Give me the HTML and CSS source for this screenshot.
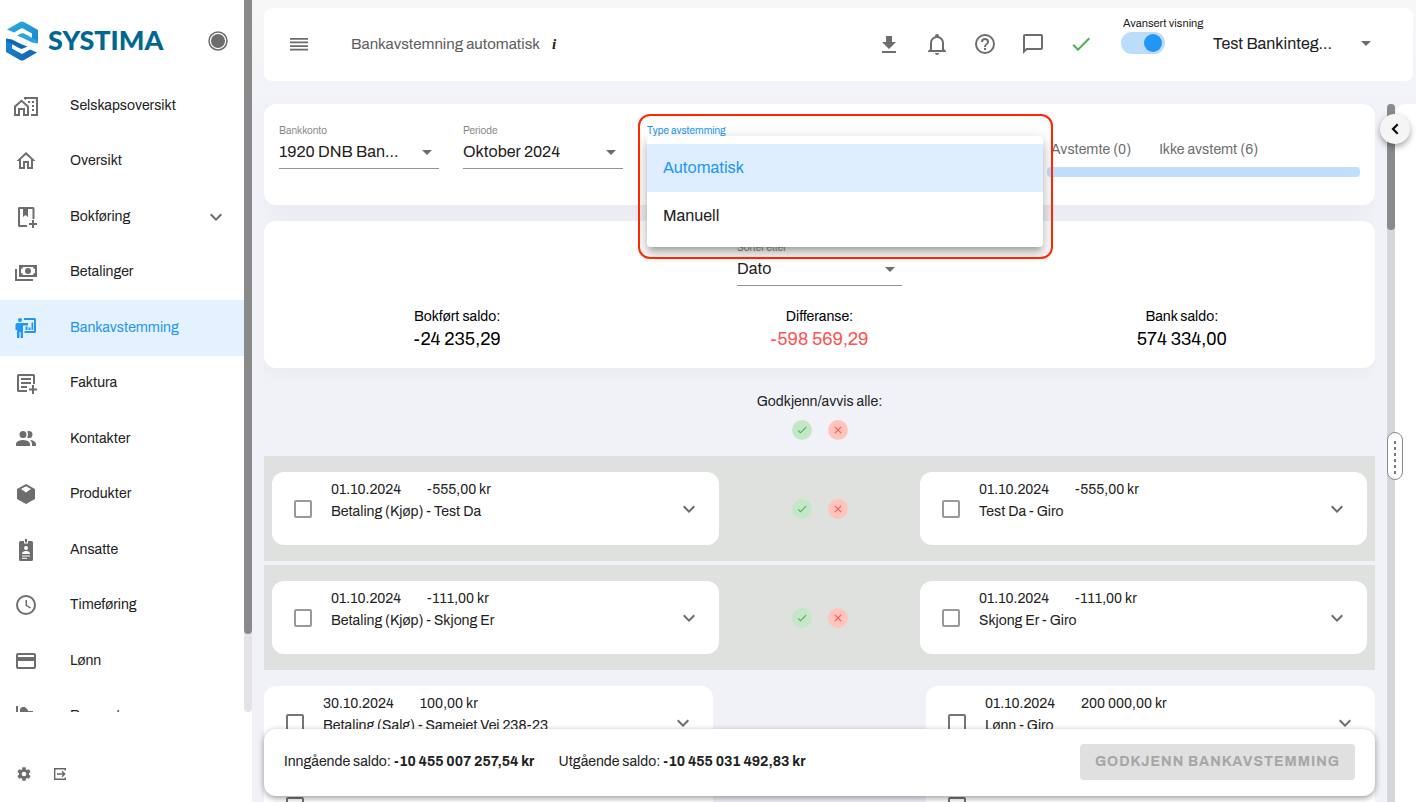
FILE: index.html
```html
<!DOCTYPE html>
<html lang="no">
<head>
    <meta charset="UTF-8">
    <meta name="viewport" content="width=device-width, initial-scale=1.0">
    <title>Bankavstemning automatisk</title>
    <link rel="stylesheet" href="styles.css">
</head>
<body>
<svg class="sprite" aria-hidden="true">
    <symbol id="chevron" viewBox="0 0 24 24"><path d="M7.41 8.58L12 13.17l4.59-4.59L18 10l-6 6-6-6z"/></symbol>
    <symbol id="check" viewBox="0 0 24 24"><path d="M21 7L9 19l-5.500-5.500 1.410-1.410L9 16.170 19.590 5.590z"/></symbol>
    <symbol id="cross" viewBox="0 0 24 24"><path d="M19 6.410L17.590 5 12 10.590 6.410 5 5 6.410 10.590 12 5 17.590 6.410 19 12 13.410 17.590 19 19 17.590 13.410 12z"/></symbol>
</svg>

<aside class="sidebar">
    <div class="side-main">
        <div class="brand">
            <a href="#" class="logo">
                <svg width="32" height="40" viewBox="0 0 32 40">
                    <defs>
                        <linearGradient id="g1" x1="0" y1="0" x2="1" y2="1"><stop offset="0" stop-color="#2bade2"/><stop offset="1" stop-color="#1a86cc"/></linearGradient>
                        <linearGradient id="g2" x1="0" y1="0" x2="1" y2="1"><stop offset="0" stop-color="#1b8ad4"/><stop offset="1" stop-color="#1062b3"/></linearGradient>
                    </defs>
                    <path fill="url(#g1)" d="M1 8.500L14 1q2-1 4 0l14 8v13L26 19v-6.500L17 7.500q-1-.5-2 0L8 11.500z"/>
                    <path fill="#2ba3df" d="M11 14.500l4-2q1.500-.7 3 0L32 20v2.500l-6-1-9-4.500z"/>
                    <path fill="url(#g2)" d="M31 31.500L18 39q-2 1-4 0L0 31V18l6 3v6.500l9 5q1 .5 2 0l7-4z"/>
                    <path fill="#0f68b8" d="M0 17.500l6 1 9 4.500 6.500 2.500-4.500 2q-1.500.7-3 0L0 20z"/>
                </svg>
                <span>SYSTIMA</span>
            </a>
            <button class="icon-btn" aria-label="Fest meny">
                <svg width="20" height="20" viewBox="0 0 20 20"><circle cx="10" cy="10" r="9" fill="none" stroke="#6d6d6d" stroke-width="1.500"/><circle cx="10" cy="10" r="7"/></svg>
            </button>
        </div>
        <nav class="menu">
            <div class="items">
                <a href="#">
                    <svg viewBox="0 0 24 24"><path fill-rule="evenodd" d="M0 12l7.500-6.500L15 12v10H9v-6H6v6H0zm2 1v7h2v-6h7v6h2v-7L7.500 8zM10 3h14v19h-7v-2h5V5H12v1l-2-1zM14 7h2v2h-2zm4 0h2v2h-2zm0 4h2v2h-2zm0 4h2v2h-2z"/></svg>
                    <span>Selskapsoversikt</span>
                </a>
                <a href="#">
                    <svg viewBox="0 0 24 24"><path d="M12 5.690l5 4.500V18h-2v-6H9v6H7v-7.810l5-4.500M12 3L2.500 12H5v8h6v-6h2v6h6v-8h2.500"/></svg>
                    <span>Oversikt</span>
                </a>
                <a href="#">
                    <svg viewBox="0 0 24 24"><path fill-rule="evenodd" d="M5 2h14a1.500 1.500 0 0 1 1.500 1.500V14h-2V4H14v8l-2.500-2L9 12V4H6v16h7v2H5.500A1.500 1.500 0 0 1 4 20.500v-17A1.500 1.500 0 0 1 5 2zM18 15h2v3h3v2h-3v3h-2v-3h-3v-2h3z"/></svg>
                    <span>Bokføring</span>
                    <svg class="arrow"><use href="#chevron"/></svg>
                </a>
                <a href="#">
                    <svg viewBox="0 0 24 24"><path fill-rule="evenodd" d="M5 5h18v12H5zm2 4v4a2 2 0 0 1 2 2h10a2 2 0 0 1 2-2V9a2 2 0 0 1-2-2H9a2 2 0 0 1-2 2zM14 8a3 3 0 1 1 0 6 3 3 0 0 1 0-6zM1 9h2v10h16v2H1z"/></svg>
                    <span>Betalinger</span>
                </a>
                <a href="#" class="active">
                    <svg viewBox="0 0 24 24"><path d="M6 2a2 2 0 1 1 0 4 2 2 0 0 1 0-4zM3 7h11v2.500H9V22H6.700v-6H5.500v6H3v-8H1.500V9A2 2 0 0 1 3 7zM10 2h10.500A1.500 1.500 0 0 1 22 3.500v12a1.500 1.500 0 0 1-1.500 1.500H10.500v-2H20V4H10zM11.500 10.500h2V14h-2zm3 1h2V14h-2zm3-5h1.700V14h-1.700z"/></svg>
                    <span>Bankavstemming</span>
                </a>
                <a href="#">
                    <svg viewBox="0 0 24 24"><path d="M4.500 3h15A1.500 1.500 0 0 1 21 4.500V13h-2V5H5v14h8v2H4.500A1.500 1.500 0 0 1 3 19.500v-15A1.500 1.500 0 0 1 4.500 3zM7 7h10v2H7zm0 4h10v2H7zm0 4h6v2H7zm11-1h2v3.500h3v2h-3V23h-2v-3.500h-3v-2h3z"/></svg>
                    <span>Faktura</span>
                </a>
                <a href="#">
                    <svg viewBox="0 0 24 24"><path d="M16 17v2H2v-2s0-4 7-4 7 4 7 4M12.500 7.500A3.500 3.500 0 1 0 9 11a3.500 3.500 0 0 0 3.500-3.500M15.940 13A5.320 5.320 0 0 1 18 17v2h4v-2s0-3.630-6.060-4M15 4a3.390 3.390 0 0 0-1.930.590 5 5 0 0 1 0 5.820A3.390 3.390 0 0 0 15 11a3.500 3.500 0 0 0 0-7z"/></svg>
                    <span>Kontakter</span>
                </a>
                <a href="#">
                    <svg viewBox="0 0 24 24"><path fill-rule="evenodd" d="M12 2l9 5v10l-9 5-9-5V7zM7 7l5 3.500L17 7l-5-2.800z"/></svg>
                    <span>Produkter</span>
                </a>
                <a href="#">
                    <svg viewBox="0 0 24 24"><path fill-rule="evenodd" d="M6.500 3H10v2.500h4V3h3.500A1.500 1.500 0 0 1 19 4.500v17a1.500 1.500 0 0 1-1.500 1.500h-11A1.500 1.500 0 0 1 5 21.500v-17A1.500 1.500 0 0 1 6.500 3zM11 1h2v3.500h-2zm1 7a2 2 0 1 0 0 4 2 2 0 0 0 0-4zm-4 8h8c0-2-1.500-3-4-3s-4 1-4 3zm0 1.500v1h8v-1zm0 2.200v1h5v-1z"/></svg>
                    <span>Ansatte</span>
                </a>
                <a href="#">
                    <svg viewBox="0 0 24 24"><path d="M12 20a8 8 0 1 0 0-16 8 8 0 0 0 0 16m0-18a10 10 0 1 1 0 20 10 10 0 0 1 0-20m-.5 5H13v5l4 2.400-.8 1.200-4.700-2.800z"/></svg>
                    <span>Timeføring</span>
                </a>
                <a href="#">
                    <svg viewBox="0 0 24 24"><path d="M20 8H4V6h16m0 12H4v-6h16m0-8H4a2 2 0 0 0-2 2v12a2 2 0 0 0 2 2h16a2 2 0 0 0 2-2V6a2 2 0 0 0-2-2z"/></svg>
                    <span>Lønn</span>
                </a>
                <a href="#">
                    <svg viewBox="0 0 24 24"><path d="M2 2h2v16h18v2H2zM8 3h3l3 3v9H6V5zM14 7h5v8h-5z"/></svg>
                    <span>Rapporter</span>
                </a>
            </div>
        </nav>
        <div class="side-foot">
            <button class="icon-btn" aria-label="Innstillinger">
                <svg width="16" height="16" viewBox="0 0 24 24"><path d="M12,15.500A3.500,3.500 0 0,1 8.500,12A3.500,3.500 0 0,1 12,8.500A3.500,3.500 0 0,1 15.500,12A3.500,3.500 0 0,1 12,15.500M19.430,12.970C19.470,12.650 19.500,12.330 19.500,12C19.500,11.670 19.470,11.340 19.430,11L21.540,9.370C21.730,9.220 21.780,8.950 21.660,8.730L19.660,5.270C19.540,5.050 19.270,4.960 19.050,5.050L16.560,6.050C16.040,5.660 15.500,5.320 14.870,5.070L14.500,2.420C14.460,2.180 14.250,2 14,2H10C9.750,2 9.540,2.180 9.500,2.420L9.130,5.070C8.500,5.320 7.960,5.660 7.440,6.050L4.950,5.050C4.730,4.960 4.460,5.050 4.340,5.270L2.340,8.730C2.210,8.950 2.270,9.220 2.460,9.370L4.570,11C4.530,11.340 4.500,11.670 4.500,12C4.500,12.330 4.530,12.650 4.570,12.970L2.460,14.630C2.270,14.780 2.210,15.050 2.340,15.270L4.340,18.730C4.460,18.950 4.730,19.030 4.950,18.950L7.440,17.940C7.960,18.340 8.500,18.680 9.130,18.930L9.500,21.580C9.540,21.820 9.750,22 10,22H14C14.250,22 14.460,21.820 14.500,21.580L14.870,18.930C15.500,18.670 16.040,18.340 16.560,17.940L19.050,18.950C19.270,19.030 19.540,18.950 19.660,18.730L21.660,15.270C21.780,15.050 21.730,14.780 21.540,14.630L19.430,12.970Z"/></svg>
            </button>
            <button class="icon-btn" aria-label="Logg ut">
                <svg width="16" height="16" viewBox="0 0 16 16"><path fill="none" stroke="#666" stroke-width="1.400" d="M13.300 4.500V2.700H2.700v10.600h10.600v-1.800M5 8h7.500M10 5.300L12.700 8 10 10.700"/></svg>
            </button>
        </div>
    </div>
    <div class="scrollbar side-bar"><div class="thumb"></div></div>
</aside>

<main>
    <header class="topbar">
        <button class="icon-btn" aria-label="Meny">
            <svg width="20" height="20" viewBox="0 0 20 20"><path d="M1 4h18v1.700H1zm0 3.600h18v1.700H1zm0 3.600h18v1.700H1zm0 3.600h18v1.700H1z"/></svg>
        </button>
        <h1>Bankavstemning automatisk</h1>
        <i class="info">i</i>
        <div class="tools">
            <button class="icon-btn" aria-label="Last ned"><svg viewBox="0 0 24 24"><path d="M5 21h14v-2H5m14-9h-4V4H9v6H5l7 7z"/></svg></button>
            <button class="icon-btn" aria-label="Varsler"><svg viewBox="0 0 24 24"><path d="M10 21h4c0 1.100-.9 2-2 2s-2-.9-2-2m11-2v1H3v-1l2-2v-6c0-3.100 2.030-5.830 5-6.710V4a2 2 0 0 1 4 0v.290c2.970.880 5 3.610 5 6.710v6zm-4-8c0-2.760-2.240-5-5-5s-5 2.240-5 5v7h10z"/></svg></button>
            <button class="icon-btn" aria-label="Hjelp"><svg viewBox="0 0 24 24"><path d="M11 18h2v-2h-2zm1-16a10 10 0 1 0 0 20 10 10 0 0 0 0-20m0 18a8 8 0 1 1 0-16 8 8 0 0 1 0 16m0-14a4 4 0 0 0-4 4h2a2 2 0 1 1 4 0c0 2-3 1.750-3 5h2c0-2.250 3-2.500 3-5a4 4 0 0 0-4-4z"/></svg></button>
            <button class="icon-btn" aria-label="Meldinger"><svg viewBox="0 0 24 24"><path d="M20 2H4a2 2 0 0 0-2 2v18l4-4h14a2 2 0 0 0 2-2V4a2 2 0 0 0-2-2m0 14H5.200L4 17.200V4h16z"/></svg></button>
            <button class="icon-btn ok" aria-label="Status"><svg><use href="#check"/></svg></button>
        </div>
        <div class="switch">
            <label for="adv">Avansert visning</label>
            <input type="checkbox" id="adv" checked>
        </div>
        <div class="select company">
            <select aria-label="Selskap"><option>Test Bankinteg...</option></select>
        </div>
    </header>

    <div class="body">
        <div class="content">
            <section class="card filters">
                <div class="field">
                    <label for="konto">Bankkonto</label>
                    <div class="select"><select id="konto"><option>1920 DNB Ban...</option></select></div>
                </div>
                <div class="field">
                    <label for="periode">Periode</label>
                    <div class="select"><select id="periode"><option>Oktober 2024</option></select></div>
                </div>
                <div class="field open">
                    <span class="label" id="type">Type avstemming</span>
                    <div class="marker"></div>
                    <ul class="dropdown" role="listbox" aria-labelledby="type">
                        <li role="option" aria-selected="true" class="active">Automatisk</li>
                        <li role="option">Manuell</li>
                    </ul>
                </div>
                <div class="progress">
                    <div class="legend"><span>Avstemte (0)</span><span>Ikke avstemt (6)</span></div>
                    <div class="bar"></div>
                </div>
            </section>

            <section class="card summary">
                <div class="field sort">
                    <label for="sort">Sorter etter</label>
                    <div class="select"><select id="sort"><option>Dato</option></select></div>
                </div>
                <div class="balances">
                    <div><p>Bokført saldo:</p><strong>-24 235,29</strong></div>
                    <div><p>Differanse:</p><strong class="diff">-598 569,29</strong></div>
                    <div><p>Bank saldo:</p><strong>574 334,00</strong></div>
                </div>
            </section>

            <div class="approve-all">
                <p>Godkjenn/avvis alle:</p>
                <div class="actions">
                    <button class="yes" aria-label="Godkjenn alle"><svg><use href="#check"/></svg></button>
                    <button class="no" aria-label="Avvis alle"><svg><use href="#cross"/></svg></button>
                </div>
            </div>

            <div class="row match">
                <div class="post">
                    <input type="checkbox" aria-label="Velg">
                    <div class="text"><div><span>01.10.2024</span><span>-555,00 kr</span></div><p>Betaling (Kjøp) - Test Da</p></div>
                    <button class="icon-btn" aria-label="Vis mer"><svg><use href="#chevron"/></svg></button>
                </div>
                <div class="actions">
                    <button class="yes" aria-label="Godkjenn"><svg><use href="#check"/></svg></button>
                    <button class="no" aria-label="Avvis"><svg><use href="#cross"/></svg></button>
                </div>
                <div class="post">
                    <input type="checkbox" aria-label="Velg">
                    <div class="text"><div><span>01.10.2024</span><span>-555,00 kr</span></div><p>Test Da - Giro</p></div>
                    <button class="icon-btn" aria-label="Vis mer"><svg><use href="#chevron"/></svg></button>
                </div>
            </div>
            <div class="row match">
                <div class="post">
                    <input type="checkbox" aria-label="Velg">
                    <div class="text"><div><span>01.10.2024</span><span>-111,00 kr</span></div><p>Betaling (Kjøp) - Skjong Er</p></div>
                    <button class="icon-btn" aria-label="Vis mer"><svg><use href="#chevron"/></svg></button>
                </div>
                <div class="actions">
                    <button class="yes" aria-label="Godkjenn"><svg><use href="#check"/></svg></button>
                    <button class="no" aria-label="Avvis"><svg><use href="#cross"/></svg></button>
                </div>
                <div class="post">
                    <input type="checkbox" aria-label="Velg">
                    <div class="text"><div><span>01.10.2024</span><span>-111,00 kr</span></div><p>Skjong Er - Giro</p></div>
                    <button class="icon-btn" aria-label="Vis mer"><svg><use href="#chevron"/></svg></button>
                </div>
            </div>
            <div class="rest">
                <div class="row">
                    <div class="post">
                        <input type="checkbox" aria-label="Velg">
                        <div class="text"><div><span>30.10.2024</span><span>100,00 kr</span></div><p>Betaling (Salg) - Sameiet Vei 238-23</p></div>
                        <button class="icon-btn" aria-label="Vis mer"><svg><use href="#chevron"/></svg></button>
                    </div>
                    <div class="post">
                        <input type="checkbox" aria-label="Velg">
                        <div class="text"><div><span>01.10.2024</span><span>200 000,00 kr</span></div><p>Lønn - Giro</p></div>
                        <button class="icon-btn" aria-label="Vis mer"><svg><use href="#chevron"/></svg></button>
                    </div>
                </div>
                <div class="row">
                    <div class="post">
                        <input type="checkbox" aria-label="Velg">
                        <div class="text"><div><span>30.10.2024</span><span>100,00 kr</span></div><p>Betaling (Salg) - Sameiet Vei 238-23</p></div>
                        <button class="icon-btn" aria-label="Vis mer"><svg><use href="#chevron"/></svg></button>
                    </div>
                    <div class="post">
                        <input type="checkbox" aria-label="Velg">
                        <div class="text"><div><span>01.10.2024</span><span>200 000,00 kr</span></div><p>Lønn - Giro</p></div>
                        <button class="icon-btn" aria-label="Vis mer"><svg><use href="#chevron"/></svg></button>
                    </div>
                </div>
            </div>
        </div>
        <div class="scrollbar main-bar"><div class="thumb"></div></div>
        <aside class="drawer">
            <button class="toggle" aria-label="Åpne panel"><svg width="20" height="20" viewBox="0 0 24 24"><path d="M16.200 7.300L11.500 12l4.700 4.700-1.900 1.900L7.700 12l6.600-6.600z"/></svg></button>
            <div class="handle"></div>
        </aside>
        <footer class="bottom">
            <p>Inngående saldo: <b>-10 455 007 257,54 kr</b></p>
            <p>Utgående saldo: <b>-10 455 031 492,83 kr</b></p>
            <button disabled>GODKJENN BANKAVSTEMMING</button>
        </footer>
    </div>
</main>
</body>
</html>
```
FILE: styles.css
```css
*{
    box-sizing: border-box;
}
body{
    margin: 0;
    height: 100vh;
    display: flex;
    overflow: hidden;
    font: 14px/20px Archivo, "Liberation Sans", Arial, sans-serif;
    color: #212121;
    background: linear-gradient(#f7f7f7 10px, #f1f2f8 120px);
}
p,h1,ul{
    margin: 0;
    padding: 0;
}
a{
    color: inherit;
    text-decoration: none;
}
button,select,input{
    font: inherit;
    color: inherit;
    margin: 0;
}
svg{
    display: block;
    width: 24px;
    height: 24px;
    fill: #6d6d6d;
    flex: none;
}
svg[width]{
    width: auto;
    height: auto;
}
.sprite{
    display: none;
}
.icon-btn{
    border: 0;
    padding: 0;
    background: none;
    cursor: pointer;
}

/* sidebar */
.sidebar{
    width: 252px;
    flex: none;
    display: flex;
    background: #fff;
}
.side-main{
    flex: 1;
    display: flex;
    flex-direction: column;
}
.brand{
    flex: none;
    height: 78px;
    padding: 4px 16px 0 6px;
    display: flex;
    align-items: center;
    justify-content: space-between;
}
.logo{
    display: flex;
    align-items: center;
    gap: 10px;
    font: 900 27px/32px Lato, sans-serif;
    color: #00678f;
}
.logo span{
    padding-bottom: 2px;
}
.menu{
    flex: 1;
    min-height: 0;
    overflow: hidden;
}
.items{
    height: 666px;
    display: grid;
    grid-template-rows: repeat(12, 1fr);
}
.menu a{
    display: flex;
    align-items: center;
    gap: 32px;
    padding: 0 16px 0 14px;
}
.menu .arrow{
    margin-left: auto;
}
.menu .active{
    color: #2196f3;
    background: #e4f1fe;
}
.menu .active svg{
    fill: #2196f3;
}
.side-foot{
    flex: none;
    height: 90px;
    display: flex;
    gap: 20px;
    padding: 34px 16px 0;
}
.scrollbar{
    width: 8px;
    flex: none;
    background: #e4e4e4;
    border-radius: 4px;
}
.thumb{
    background: #8a8a8a;
    border-radius: 4px;
}
.side-bar{
    margin-bottom: 90px;
}
.side-bar .thumb{
    height: 89%;
    border-radius: 0 0 4px 4px;
}

/* top bar */
main{
    flex: 1;
    min-width: 0;
    display: flex;
    flex-direction: column;
    padding: 8px 0 0 12px;
}
.topbar{
    flex: none;
    height: 73px;
    margin: 0 3px 23px 0;
    padding: 0 35px 2px 25px;
    display: flex;
    align-items: center;
    background: #fff;
    border-radius: 8px;
}
h1{
    margin-left: 42px;
    font-size: 15px;
    font-weight: normal;
    color: #5c5c5c;
}
.info{
    margin-left: 12px;
    font: italic bold 15px/20px "Liberation Serif", serif;
}
.tools{
    display: flex;
    gap: 24px;
    margin-left: auto;
}
.ok svg{
    fill: #4caf50;
}
.switch{
    align-self: flex-start;
    display: flex;
    flex-direction: column;
    gap: 2px;
    width: 92px;
    margin-left: 28px;
    padding-top: 8px;
}
.switch label{
    padding-left: 2px;
    font-size: 11px;
    line-height: 14px;
}
.switch input{
    appearance: none;
    width: 44px;
    height: 22px;
    border-radius: 11px;
    background: #bbdcfb;
    display: flex;
    justify-content: flex-end;
    padding: 2px 3px;
}
.switch input::before{
    content: "";
    width: 18px;
    border-radius: 50%;
    background: #2196f3;
}
.select{
    position: relative;
}
.select::after{
    content: "";
    position: absolute;
    right: 7px;
    top: 50%;
    margin-top: -3px;
    border: 5px solid transparent;
    border-top-color: #6d6d6d;
    border-bottom: 0;
    pointer-events: none;
}
select{
    appearance: none;
    width: 100%;
    height: 30px;
    padding: 0 28px 2px 0;
    border: 0;
    border-radius: 0;
    background: none;
    font-size: 16px;
}
.company{
    width: 165px;
}
.company select{
    padding-bottom: 0;
}

/* content */
.body{
    flex: 1;
    min-height: 0;
    display: flex;
    position: relative;
}
.content{
    flex: 1;
    min-width: 0;
    height: 100%;
    overflow: hidden;
    margin-right: 12px;
}
.card{
    background: #fff;
    border-radius: 12px;
    box-shadow: 0 4px 24px rgba(0,0,0,0.04);
}
.filters{
    display: flex;
    gap: 24px;
    margin-bottom: 16px;
    padding: 20px 15px 28px;
}
.field{
    width: 160px;
}
.field label,.label{
    display: block;
    font-size: 10px;
    line-height: 14px;
    color: #8a8a8a;
}
.field .select{
    border-bottom: 1px solid #949494;
}
.open{
    position: relative;
}
.open .label{
    color: #2196f3;
}
.dropdown{
    position: absolute;
    z-index: 2;
    top: 12px;
    left: 0;
    width: 396px;
    padding: 8px 0 7px;
    list-style: none;
    font-size: 16px;
    line-height: 48px;
    background: #fff;
    border-radius: 4px;
    box-shadow: 0 5px 5px -3px rgba(0,0,0,0.2), 0 8px 10px 1px rgba(0,0,0,0.14), 0 3px 14px 2px rgba(0,0,0,0.12);
}
.dropdown li{
    padding: 0 16px;
}
.dropdown .active{
    color: #2196f3;
    background: #deeefe;
}
.marker{
    position: absolute;
    z-index: 3;
    top: -10px;
    left: -9px;
    width: 415px;
    height: 145px;
    border: 2px solid #ff2600;
    border-radius: 12px;
}
.progress{
    width: 313px;
    margin-left: auto;
    padding-top: 16px;
}
.legend{
    display: flex;
    gap: 28px;
    padding-left: 4px;
    margin-bottom: 7px;
    color: #6d6d6d;
}
.bar{
    height: 10px;
    border-radius: 4px;
    background: #bfdffb;
}
.summary{
    padding: 20px 12px 16px;
}
.sort{
    width: 165px;
    margin: 0 auto 21px;
}
.balances{
    display: grid;
    grid-template-columns: repeat(3, 1fr);
    text-align: center;
    color: #000;
}
.balances strong{
    font-size: 18px;
    line-height: 25px;
    font-weight: normal;
}
.balances .diff{
    color: #ff5252;
}
.approve-all{
    padding: 24px 0 16px;
    text-align: center;
}
.approve-all p{
    margin-bottom: 8px;
}
.actions{
    display: flex;
    justify-content: center;
    align-items: center;
    gap: 16px;
}
.actions button{
    width: 20px;
    height: 20px;
    padding: 4px;
    border: 0;
    border-radius: 50%;
}
.actions svg{
    width: 12px;
    height: 12px;
}
.yes{
    background: #c5e6c7;
}
.yes svg{
    fill: #4caf50;
}
.no{
    background: #ffc4bb;
}
.no svg{
    fill: #ff5252;
}
.row{
    display: grid;
    grid-template-columns: 1fr 1fr;
    column-gap: 213px;
}
.match{
    grid-template-columns: 1fr 201px 1fr;
    column-gap: 0;
    margin-bottom: 4px;
    padding: 16px 8px;
    background: #dfe1de;
}
.post{
    display: flex;
    align-items: center;
    min-width: 0;
    padding: 7px 18px 7px 22px;
    background: #fff;
    border-radius: 12px;
}
.post input{
    appearance: none;
    width: 18px;
    height: 18px;
    margin-right: 19px;
    border: 2px solid #757575;
    border-radius: 2px;
}
.match input{
    border-color: #999;
}
.text{
    flex: 1;
    padding-bottom: 15px;
    line-height: 22px;
}
.text div{
    display: flex;
    gap: 26px;
}
.rest{
    display: grid;
    gap: 10px;
    padding-top: 12px;
}

/* right side */
.main-bar{
    background: #d6d6da;
    border-radius: 4px 4px 0 0;
}
.main-bar .thumb{
    height: 126px;
}
.drawer{
    position: relative;
    width: 21px;
    flex: none;
    background: #fff;
    border-radius: 12px 0 0 0;
}
.toggle{
    position: absolute;
    top: 10px;
    left: -15px;
    width: 30px;
    height: 30px;
    padding: 5px;
    border: 0;
    border-radius: 50%;
    background: #f5f5f5;
    box-shadow: 0 3px 6px rgba(0,0,0,0.35);
}
.toggle svg{
    fill: #111;
}
.handle{
    position: absolute;
    top: 328px;
    left: -8px;
    width: 16px;
    height: 48px;
    border: 1px solid #8a8a8a;
    border-radius: 8px;
    background: #fff;
}
.handle::before{
    content: "";
    position: absolute;
    top: 8px;
    left: 6px;
    width: 2px;
    height: 33px;
    background: repeating-linear-gradient(#777 0 3px, #fff 3px 6px);
}
.bottom{
    position: absolute;
    left: 0;
    right: 41px;
    bottom: 6px;
    display: flex;
    align-items: center;
    gap: 24px;
    padding: 15px 20px 16px;
    background: #fff;
    border-radius: 12px;
    box-shadow: 0 2px 6px rgba(0,0,0,0.4);
}
.bottom button{
    margin-left: auto;
    height: 36px;
    padding: 0 15px;
    border: 0;
    border-radius: 4px;
    background: #e0e0e0;
    color: #a6a6a6;
    font-weight: bold;
    letter-spacing: 1px;
}
```
